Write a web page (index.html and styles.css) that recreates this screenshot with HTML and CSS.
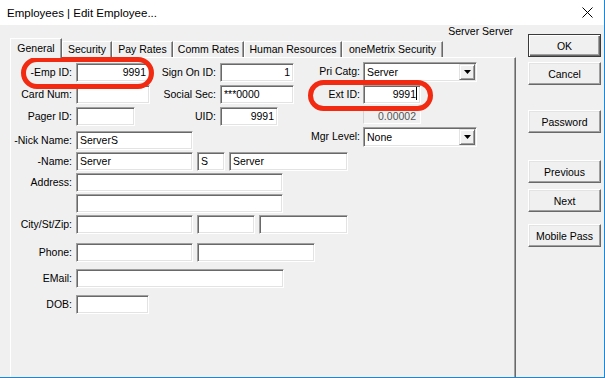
FILE: index.html
```html
<!DOCTYPE html>
<html>
  <head>
    <meta charset="utf-8">
    <title>Employees | Edit Employee...</title>
    <link rel="stylesheet" href="styles.css">
  </head>
  <body>
    <div class="window">
      <div class="titlebar">
        <span class="title">Employees | Edit Employee...</span>
        <svg class="close" width="11" height="11" viewBox="0 0 11 11"><path d="M0.5 0.5 L10.5 10.5 M10.5 0.5 L0.5 10.5" stroke="#000" stroke-width="1"/></svg>
      </div>

      <div class="main">
        <div class="editor">
          <div class="owner">Server Server</div>
          <div class="tabs">
            <div class="tab active" style="width:52px">General</div>
            <div class="tab" style="width:50px">Security</div>
            <div class="tab" style="width:61px">Pay Rates</div>
            <div class="tab" style="width:71px">Comm Rates</div>
            <div class="tab" style="width:98px">Human Resources</div>
            <div class="tab" style="width:101px">oneMetrix Security</div>
          </div>

          <div class="pane">
            <div class="top">
              <div class="ids">
                <div class="id-grid">
                  <label class="lbl">-Emp ID:</label>
                  <div class="field num">9991</div>
                  <label class="lbl">Sign On ID:</label>
                  <div class="field num">1</div>

                  <label class="lbl">Card Num:</label>
                  <div class="field"></div>
                  <label class="lbl">Social Sec:</label>
                  <div class="field">***0000</div>

                  <label class="lbl">Pager ID:</label>
                  <div class="field pager"></div>
                  <label class="lbl">UID:</label>
                  <div class="field num uid">9991</div>
                </div>
                <div class="nick-row">
                  <label class="lbl">-Nick Name:</label>
                  <div class="field">ServerS</div>
                </div>
              </div>

              <div class="cat">
                <label class="lbl">Pri Catg:</label>
                <div class="select"><span class="select-text">Server</span><span class="drop"><svg width="7" height="4" viewBox="0 0 7 4"><path d="M0 0 H7 L3.5 4 Z" fill="#000"/></svg></span></div>

                <label class="lbl">Ext ID:</label>
                <div class="field num short">9991<span class="caret"></span></div>

                <span></span>
                <div class="static">0.00002</div>

                <label class="lbl">Mgr Level:</label>
                <div class="select"><span class="select-text">None</span><span class="drop"><svg width="7" height="4" viewBox="0 0 7 4"><path d="M0 0 H7 L3.5 4 Z" fill="#000"/></svg></span></div>
              </div>
            </div>

            <div class="contact">
              <div class="row">
                <label class="lbl">-Name:</label>
                <div class="fields">
                  <div class="field" style="width:117px">Server</div>
                  <div class="field" style="width:28px">S</div>
                  <div class="field" style="width:119px">Server</div>
                </div>
              </div>
              <div class="row">
                <label class="lbl">Address:</label>
                <div class="fields"><div class="field" style="width:207px"></div></div>
              </div>
              <div class="row">
                <span></span>
                <div class="fields"><div class="field" style="width:207px"></div></div>
              </div>
              <div class="row">
                <label class="lbl">City/St/Zip:</label>
                <div class="fields">
                  <div class="field" style="width:117px"></div>
                  <div class="field" style="width:58px"></div>
                  <div class="field" style="width:89px"></div>
                </div>
              </div>
              <div class="row phone">
                <label class="lbl">Phone:</label>
                <div class="fields">
                  <div class="field" style="width:117px"></div>
                  <div class="field" style="width:118px"></div>
                </div>
              </div>
              <div class="row spaced">
                <label class="lbl">EMail:</label>
                <div class="fields"><div class="field" style="width:208px"></div></div>
              </div>
              <div class="row spaced">
                <label class="lbl">DOB:</label>
                <div class="fields"><div class="field" style="width:73px"></div></div>
              </div>
            </div>
          </div>
        </div>

        <div class="buttons">
          <button class="btn default">OK</button>
          <button class="btn gap-1">Cancel</button>
          <button class="btn gap-2">Password</button>
          <button class="btn gap-3">Previous</button>
          <button class="btn gap-4">Next</button>
          <button class="btn gap-5">Mobile Pass</button>
        </div>
      </div>

      <!-- red highlight loops drawn over the form -->
      <div class="mark mark-emp"></div>
      <div class="mark mark-ext"></div>
    </div>
  </body>
</html>
```

FILE: styles.css
```css
body
{
  margin: 0;
  font-family: "Liberation Sans", Arial, sans-serif;
  font-size: 10.5px;
  color: #000;
  background: #f0f0f0;
}

.window
{
  position: relative;
  width: 605px;
  height: 378px;
  box-sizing: border-box;
  border-right: 1px solid #1b87d6;
  border-bottom: 1px solid #1b87d6;
  background: #f0f0f0;
  overflow: hidden;
}

.titlebar
{
  height: 25px;
  background: #fff;
  display: flex;
  align-items: center;
  justify-content: space-between;
  padding: 0 11px 0 7px;
}

.title
{
  font-size: 11.5px;
}

.main
{
  display: flex;
}

.editor
{
  margin-left: 10px;
  width: 506px;
}

.owner
{
  height: 13px;
  line-height: 13px;
  text-align: right;
  padding-right: 3px;
}

.tabs
{
  display: flex;
  align-items: flex-end;
  height: 19px;
  position: relative;
  z-index: 1;
}

.tab
{
  box-sizing: border-box;
  height: 16px;
  line-height: 15px;
  text-align: center;
  white-space: nowrap;
  border-top: 1px solid #fff;
  border-left: 1px solid #fff;
  border-right: 1px solid #696969;
  box-shadow: inset -1px 0 0 #a0a0a0;
  background: #f0f0f0;
}

.tab.active
{
  height: 20px;
  margin-bottom: -1px;
  padding-top: 2px;
}

.pane
{
  box-sizing: border-box;
  height: 340px;
  border-top: 1px solid #fff;
  border-left: 1px solid #fff;
  border-right: 1px solid #696969;
  box-shadow: inset -1px 0 0 #a0a0a0;
  padding-top: 4px;
}

.top
{
  display: flex;
}

.ids
{
  width: 283px;
  padding-top: 1px;
}

.id-grid
{
  display: grid;
  grid-template-columns: 65px 74px 70px 74px;
  grid-auto-rows: 19px;
  row-gap: 3px;
}

.nick-row
{
  display: grid;
  grid-template-columns: 65px 117px;
  height: 19px;
  margin-top: 5px;
}

.cat
{
  display: grid;
  grid-template-columns: 69px 114px;
  grid-template-rows: 20px 19px 17px 20px;
  row-gap: 3px;
}

.cat .lbl
{
  padding-right: 3px;
}

.lbl
{
  text-align: right;
  padding-right: 4px;
  line-height: 19px;
  white-space: nowrap;
}

.field
{
  box-sizing: border-box;
  height: 19px;
  background: #fff;
  border: 1px solid;
  border-color: #a0a0a0 #fff #fff #a0a0a0;
  box-shadow: inset 1px 1px 0 #696969, inset -1px -1px 0 #e3e3e3;
  padding: 0 3px;
  line-height: 17px;
  white-space: nowrap;
}

.num
{
  text-align: right;
}

.pager
{
  width: 59px;
}

.uid
{
  width: 58px;
}

.short
{
  width: 58px;
}

.caret
{
  display: inline-block;
  width: 1px;
  height: 13px;
  background: #000;
  vertical-align: -2px;
}

.static
{
  box-sizing: border-box;
  width: 58px;
  height: 17px;
  border: 1px solid;
  border-color: #d4d4d4 #fff #fff #d4d4d4;
  text-align: right;
  padding-right: 4px;
  line-height: 16px;
  color: #545454;
}

.select
{
  box-sizing: border-box;
  display: flex;
  height: 20px;
  background: #fff;
  border: 1px solid;
  border-color: #a0a0a0 #fff #fff #a0a0a0;
  box-shadow: inset 1px 1px 0 #696969, inset -1px -1px 0 #e3e3e3;
  padding: 1px;
}

.select-text
{
  flex: 1;
  padding-left: 2px;
  line-height: 16px;
}

.drop
{
  box-sizing: border-box;
  width: 16px;
  height: 16px;
  background: #f0f0f0;
  border: 1px solid;
  border-color: #e3e3e3 #696969 #696969 #e3e3e3;
  box-shadow: inset 1px 1px 0 #fff, inset -1px -1px 0 #a0a0a0;
  display: flex;
  align-items: center;
  justify-content: center;
}

.contact
{
  margin-top: 2px;
}

.row
{
  display: grid;
  grid-template-columns: 65px auto;
  height: 19px;
  margin-top: 2px;
}

.row:first-child
{
  margin-top: 0;
}

.row.phone
{
  margin-top: 9px;
}

.row.spaced
{
  margin-top: 7px;
}

.fields
{
  display: flex;
  gap: 4px;
}

.buttons
{
  display: flex;
  flex-direction: column;
  margin-left: 12px;
  padding-top: 9px;
  width: 73px;
}

.btn
{
  box-sizing: border-box;
  height: 23px;
  margin: 0;
  padding: 0;
  font-family: "Liberation Sans", Arial, sans-serif;
  font-size: 10.5px;
  color: #000;
  background: #f0f0f0;
  border: 1px solid;
  border-color: #fff #696969 #696969 #fff;
  box-shadow: inset -1px -1px 0 #a0a0a0, inset 1px 1px 0 #e3e3e3;
}

.btn.default
{
  border: 1px solid #3a3a3a;
  box-shadow: inset 1px 1px 0 #fff, inset -1px -1px 0 #696969, inset -2px -2px 0 #a0a0a0;
}

.gap-1 { margin-top: 5px; }
.gap-2 { margin-top: 25px; }
.gap-3 { margin-top: 27px; }
.gap-4 { margin-top: 6px; }
.gap-5 { margin-top: 12px; }

.mark
{
  position: absolute;
  box-sizing: border-box;
  border: 5px solid #f22a12;
  border-radius: 16px;
}

.mark-emp
{
  left: 21px;
  top: 57px;
  width: 133px;
  height: 32px;
}

.mark-ext
{
  left: 308px;
  top: 80px;
  width: 125px;
  height: 31px;
}
```
